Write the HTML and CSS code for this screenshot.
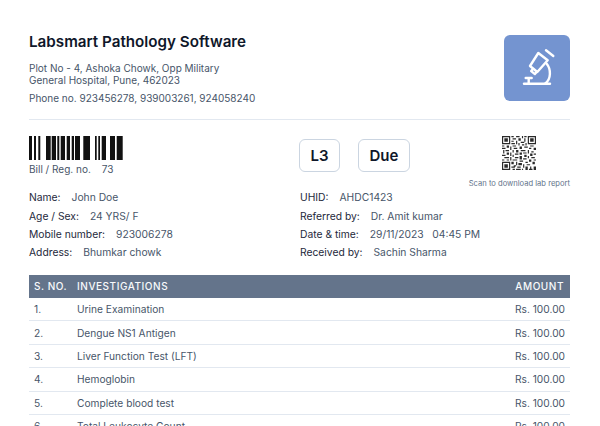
FILE: index.html
```html
<!DOCTYPE html>
<html lang="en">
<head>
<meta charset="utf-8">
<title>Labsmart Pathology Software</title>
<link rel="stylesheet" href="styles.css">
</head>
<body>
<main class="page">
  <header class="head">
    <div class="lab">
      <h1 class="lab-name">Labsmart Pathology Software</h1>
      <p class="lab-addr">Plot No - 4, Ashoka Chowk, Opp Military<br>General Hospital, Pune, 462023</p>
      <p class="lab-phone">Phone no. 923456278, 939003261, 924058240</p>
    </div>
    <div class="logo">
      <svg width="44" height="44" viewBox="0 0 44 44" fill="none" stroke="#fff" stroke-width="2.400" stroke-linecap="round" stroke-linejoin="round">
        <path d="M31 4.300L38.300 10"/>
        <path d="M23.300 7L32.700 14.300 22.300 26 15 20z"/>
        <path d="M17.500 23.500l-1.300 1.600 3.700 3 1.300-1.600"/>
        <path d="M31.700 17.700C36 23 36.500 33 30 37.700"/>
        <path d="M9 37.700H35"/>
        <path d="M10.700 32h6M13.700 32v5.700"/>
      </svg>
    </div>
  </header>

  <section class="codes">
    <div class="bill">
      <svg class="barcode" width="95" height="24" viewBox="0 0 95 24" fill="#111">
        <path d="M0 0h3v24H0zM5 0h2v24H5zM9.300 0h2v24h-2zM17 0h4.700v24H17zM22.700 0H27v24h-4.300zM28.300 0h2v24h-2zM31.700 0H36v24h-4.300zM37.700 0H41v24h-3.300zM42.700 0H45v24h-2.300zM46 0h5v24h-5zM54.300 0H61v24h-6.700zM66 0h1.700v24H66zM69.300 0H71v24h-1.700zM72.700 0H77v24h-4.300zM81 0h5v24h-5zM87.700 0h6v24h-6z"/>
      </svg>
      <p class="bill-no"><span>Bill / Reg. no.</span><span>73</span></p>
    </div>
    <div class="tags">
      <span class="tag">L3</span>
      <span class="tag">Due</span>
    </div>
    <div class="scan">
      <svg class="qr" width="38" height="38" viewBox="0 0 29 29" fill="#2a2a2a">
        <path fill-rule="evenodd" d="M0 0h7v7H0zM1 1v5h5V1zM22 0h7v7h-7zM23 1v5h5V1zM0 22h7v7H0zM1 23v5h5v-5z"/>
        <path d="M2 2h3v3H2zM24 2h3v3h-3zM2 24h3v3H2z"/>
        <path d="M8 0h2v1H8zM12 0h3v1h-3zM17 0h1v2h-1zM19 0h2v1h-2zM9 2h3v1H9zM14 2h2v2h-2zM19 2h1v3h-1zM8 4h2v1H8zM12 4h1v3h-1zM16 5h3v1h-3zM8 6h3v1H8zM14 6h1v2h-1zM20 6h1v2h-1zM17 7h2v1h-2zM9 8h3v1H9z"/>
        <path d="M0 8h2v1H0zM4 8h2v2H4zM7 9h1v3H7zM0 10h3v1H0zM10 10h3v1h-3zM15 9h2v2h-2zM19 9h3v1h-3zM24 8h3v1h-3zM27 10h2v2h-2zM23 10h2v1h-2zM1 12h1v3H1zM3 12h3v1H3zM9 12h1v2H9zM12 12h2v2h-2zM16 12h4v1h-4zM22 12h1v3h-1zM25 13h2v1h-2zM4 14h2v2H4zM7 14h1v3H7zM11 15h3v1h-3zM15 14h2v2h-2zM18 14h3v1h-3zM24 15h2v2h-2zM27 15h2v1h-2zM0 16h3v1H0zM9 16h1v2H9zM19 16h2v2h-2zM22 17h1v2h-1zM2 18h4v1H2zM7 18h1v3H7zM11 18h3v1h-3zM15 17h2v3h-2zM25 18h3v1h-3zM0 20h2v1H0zM4 20h2v1H4zM9 20h4v1H9zM18 19h3v1h-3zM23 20h2v2h-2zM27 20h2v1h-2z"/>
        <path d="M8 22h2v2H8zM12 22h1v3h-1zM15 21h3v1h-3zM20 22h2v1h-2zM26 22h2v2h-2zM10 25h2v1h-2zM14 23h3v2h-3zM18 24h1v3h-1zM21 24h3v1h-3zM8 26h3v1H8zM13 26h3v1h-3zM20 26h2v3h-2zM24 26h1v2h-1zM27 26h2v3h-2zM9 28h2v1H9zM12 28h4v1h-4zM17 28h1v1h-1zM23 28h3v1h-3z"/>
      </svg>
      <p class="scan-text">Scan to download lab report</p>
    </div>
  </section>

  <section class="info">
    <dl class="col">
      <div class="row"><dt>Name:</dt><dd>John Doe</dd></div>
      <div class="row"><dt>Age / Sex:</dt><dd>24 YRS/ F</dd></div>
      <div class="row"><dt>Mobile number:</dt><dd>923006278</dd></div>
      <div class="row"><dt>Address:</dt><dd>Bhumkar chowk</dd></div>
    </dl>
    <dl class="col">
      <div class="row"><dt>UHID:</dt><dd>AHDC1423</dd></div>
      <div class="row"><dt>Referred by:</dt><dd>Dr. Amit kumar</dd></div>
      <div class="row"><dt>Date &amp; time:</dt><dd>29/11/2023 &nbsp; 04:45 PM</dd></div>
      <div class="row"><dt>Received by:</dt><dd>Sachin Sharma</dd></div>
    </dl>
  </section>

  <table class="tests">
    <thead>
      <tr><th class="c-no">S. NO.</th><th>INVESTIGATIONS</th><th class="c-amt">AMOUNT</th></tr>
    </thead>
    <tbody>
      <tr><td class="c-no">1.</td><td>Urine Examination</td><td class="c-amt">Rs. 100.00</td></tr>
      <tr><td class="c-no">2.</td><td>Dengue NS1 Antigen</td><td class="c-amt">Rs. 100.00</td></tr>
      <tr><td class="c-no">3.</td><td>Liver Function Test (LFT)</td><td class="c-amt">Rs. 100.00</td></tr>
      <tr><td class="c-no">4.</td><td>Hemoglobin</td><td class="c-amt">Rs. 100.00</td></tr>
      <tr><td class="c-no">5.</td><td>Complete blood test</td><td class="c-amt">Rs. 100.00</td></tr>
      <tr><td class="c-no">6.</td><td>Total Leukocyte Count</td><td class="c-amt">Rs. 100.00</td></tr>
    </tbody>
  </table>
</main>
</body>
</html>
```
FILE: styles.css
```css
* { box-sizing: border-box; }
html, body { margin: 0; padding: 0; height: 426px; overflow: hidden; background: #fff; }
body { font-family: Inter, "Liberation Sans", sans-serif; color: #475569; }
p, h1, dl, dd { margin: 0; }

.page { width: 600px; height: 426px; overflow: hidden; padding: 32px 30px 0 29px; }

.head { display: flex; justify-content: space-between; height: 88px; border-bottom: 1px solid #e2e8f0; }
.lab-name { font-size: 15.200px; line-height: 19px; font-weight: 600; color: #0f172a; }
.lab-addr { margin-top: 11px; font-size: 10px; line-height: 12px; }
.lab-phone { margin-top: 5px; font-size: 10px; line-height: 14px; }
.logo { width: 66px; height: 66px; margin-top: 3px; border-radius: 6px; background: #7494d0; display: flex; align-items: center; justify-content: center; }

.codes { display: flex; margin-top: 16px; height: 52px; }
.bill { width: 270px; }
.barcode { display: block; }
.bill-no { display: flex; gap: 11px; font-size: 10px; line-height: 12px; margin-top: 3px; }
.tags { display: flex; gap: 18px; margin-top: 3px; height: 33px; }
.tag { display: flex; align-items: center; justify-content: center; height: 33px; padding: 0 10.500px; border: 1.500px solid #cbd5e1; border-radius: 6px; font-size: 15px; font-weight: 600; color: #0f172a; }
.scan { margin-left: auto; display: flex; flex-direction: column; align-items: center; }
.qr { display: block; }
.scan-text { margin-top: 9px; font-size: 7.600px; line-height: 9px; color: #64748b; }

.info { display: grid; grid-template-columns: 271px 1fr; }
.col { display: flex; flex-direction: column; }
.row { display: flex; gap: 11px; height: 18.400px; align-items: center; font-size: 10.300px; }
.row dt { color: #1e293b; }

.tests { width: 100%; margin-top: 13px; border-collapse: collapse; table-layout: fixed; font-size: 10.200px; }
.tests th { height: 23px; background: #64748b; color: #f8fafc; font-size: 10px; font-weight: 500; letter-spacing: .55px; text-align: left; padding: 0; }
.tests td { height: 23.400px; padding: 0; border-bottom: 1px solid #e2e8f0; }
.c-no { width: 48px; padding-left: 5px !important; }
.tests .c-amt { width: 110px; text-align: right; padding-right: 5px; }
.tests th.c-amt { padding-right: 6px; }
```
